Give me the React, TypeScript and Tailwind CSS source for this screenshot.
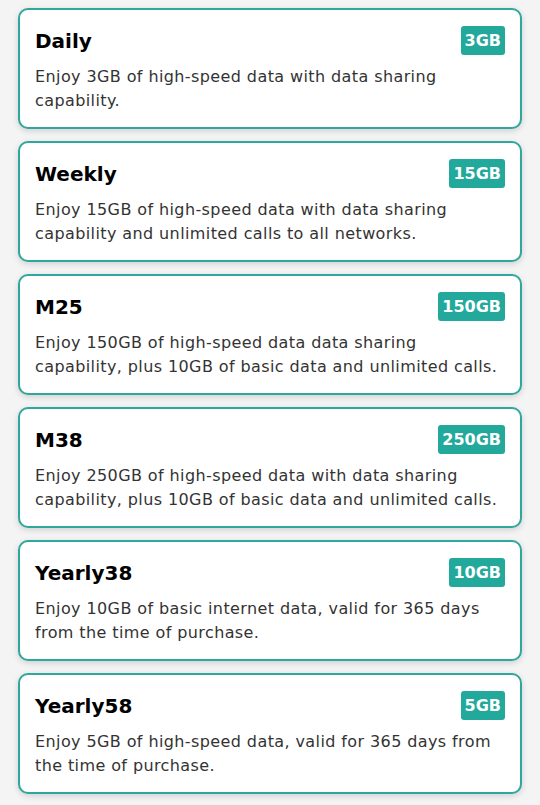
const plans = [
  {
    name: "Daily",
    size: "3GB",
    lines: ["Enjoy 3GB of high-speed data with data sharing", "capability."],
  },
  {
    name: "Weekly",
    size: "15GB",
    lines: [
      "Enjoy 15GB of high-speed data with data sharing",
      "capability and unlimited calls to all networks.",
    ],
  },
  {
    name: "M25",
    size: "150GB",
    lines: [
      "Enjoy 150GB of high-speed data data sharing",
      "capability, plus 10GB of basic data and unlimited calls.",
    ],
  },
  {
    name: "M38",
    size: "250GB",
    lines: [
      "Enjoy 250GB of high-speed data with data sharing",
      "capability, plus 10GB of basic data and unlimited calls.",
    ],
  },
  {
    name: "Yearly38",
    size: "10GB",
    lines: [
      "Enjoy 10GB of basic internet data, valid for 365 days",
      "from the time of purchase.",
    ],
  },
  {
    name: "Yearly58",
    size: "5GB",
    lines: [
      "Enjoy 5GB of high-speed data, valid for 365 days from",
      "the time of purchase.",
    ],
  },
];

function PlanCard({ name, size, lines }: { name: string; size: string; lines: string[] }) {
  return (
    <div className="bg-white border-2 border-[#2fa79c] rounded-[10px] shadow-[0_2px_6px_rgba(0,0,0,0.15)] px-[15px] pt-4 pb-[14px]">
      <div className="flex items-center justify-between h-[29px]">
        <h3 className="text-[20px] font-bold text-black leading-none">{name}</h3>
        <span className="bg-[#22a99b] text-white text-[16px] font-bold rounded-[3px] px-[4px] h-[29px] flex items-center leading-none">
          {size}
        </span>
      </div>
      <p className="mt-[10px] text-[16px] leading-[24px] tracking-[0.4px] text-[#333333]">
        {lines.map((l) => (
          <span key={l} className="block whitespace-nowrap">
            {l}
          </span>
        ))}
      </p>
    </div>
  );
}

export default function App() {
  return (
    <div
      className="min-h-[805px] bg-[#f4f4f4] px-[18px] pt-2 flex flex-col gap-3"
      style={{ fontFamily: '"DejaVu Sans", sans-serif' }}
    >
      {plans.map((p) => (
        <PlanCard key={p.name} {...p} />
      ))}
    </div>
  );
}
